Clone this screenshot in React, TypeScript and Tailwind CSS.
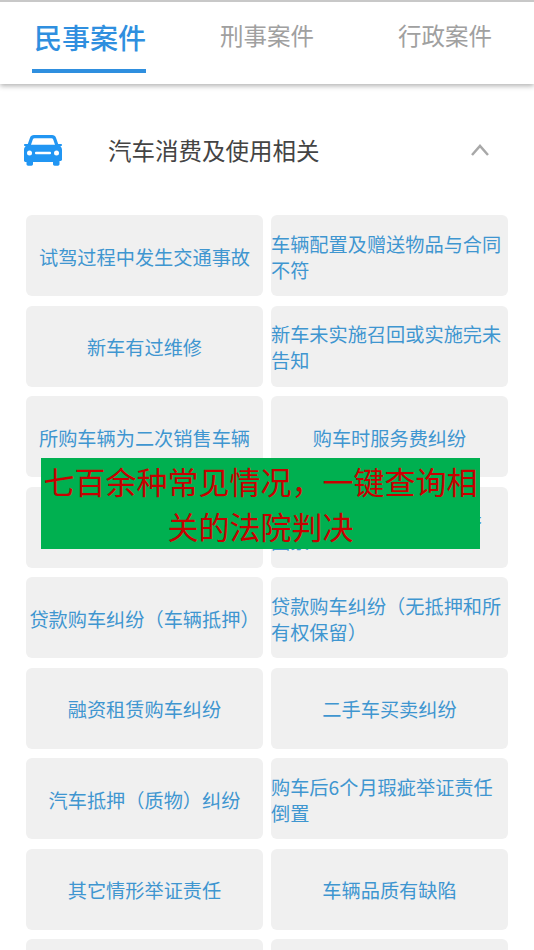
const leftCases = [
  '试驾过程中发生交通事故',
  '新车有过维修',
  '所购车辆为二次销售车辆',
  '',
  '贷款购车纠纷（车辆抵押）',
  '融资租赁购车纠纷',
  '汽车抵押（质物）纠纷',
  '其它情形举证责任',
  '',
];

const rightCases = [
  '车辆配置及赠送物品与合同不符',
  '新车未实施召回或实施完未告知',
  '购车时服务费纠纷',
  '车辆交付不符的处理结果\n因素',
  '贷款购车纠纷（无抵押和所有权保留）',
  '二手车买卖纠纷',
  '购车后6个月瑕疵举证责任倒置',
  '车辆品质有缺陷',
  '',
];

function CaseCard({ title }: { title: string }) {
  const isLong = title.length > 12;

  return (
    <div
      className={`flex h-[81px] items-center rounded-md bg-[#f0f0f0] pt-[2px] text-[19.2px] leading-[26px] whitespace-pre-line text-[#3f96d0] ${
        isLong ? 'justify-start' : 'justify-center text-center'
      }`}
    >
      <span className="block w-full">{title}</span>
    </div>
  );
}

function CarIcon() {
  return (
    <svg viewBox="0 0 38 32" className="h-[32px] w-[38px]" fill="#2196f3">
      <path d="M10 1h18c2 0 3.400 1 4 2.800L34.200 10H37c.6 0 1 .5 1 1s-.4 1-1 1h-.8c1.100 1 1.800 2.400 1.800 4v9.500c0 .8-.6 1.400-1.400 1.400H35.500V30c0 1-.7 1.700-1.600 1.700h-3.300c-.9 0-1.600-.7-1.600-1.700v-2.100H9V30c0 1-.7 1.700-1.600 1.700H4.100c-.9 0-1.600-.7-1.600-1.700v-2.100H1.400C.6 27.900 0 27.300 0 26.500V16c0-1.600.7-3 1.800-4H1c-.6 0-1-.5-1-1s.4-1 1-1h2.800L6 3.800C6.600 2 8 1 10 1zm.6 3.200c-.9 0-1.500.4-1.800 1.200L7 10.700h24l-1.800-5.300c-.3-.8-.9-1.200-1.800-1.200z" />
      <circle cx="5.500" cy="19" r="2.500" fill="#fff" />
      <circle cx="32.500" cy="19" r="2.500" fill="#fff" />
      <rect x="11" y="17.800" width="16" height="2.500" rx="1" fill="#fff" />
    </svg>
  );
}

export default function App() {
  return (
    <div className="relative h-[950px] w-[534px] overflow-hidden bg-white font-['Noto_Sans_CJK_SC',sans-serif]">
      <header className="flex h-[84px] border-t-2 border-[#c8c8c8] bg-white shadow-[0_2px_5px_rgba(0,0,0,0.3)]">
        <div className="ml-[32px] flex h-full w-[114px] flex-col items-center">
          <span className="mt-[16px] ml-[2px] text-[28px] leading-[38px] font-medium text-[#2f8fdf]">民事案件</span>
          <span className="mt-[13px] h-[4px] w-full bg-[#2f8fdf]" />
        </div>
        <span className="mt-[16px] ml-[74px] text-[23.500px] leading-[34px] text-[#a0a0a0]">刑事案件</span>
        <span className="mt-[16px] ml-[84px] text-[23.500px] leading-[34px] text-[#a0a0a0]">行政案件</span>
      </header>

      <section className="mt-[48px] flex h-[36px] items-center pr-[44px] pl-[24px]">
        <CarIcon />
        <span className="ml-[46px] text-[23.500px] leading-[34px] text-[#444444]">汽车消费及使用相关</span>
        <svg viewBox="0 0 20 14" className="ml-auto h-[14px] w-[20px]" fill="none" stroke="#a8a8a8" strokeWidth="2.500">
          <path d="M2 12l8-9 8 9" />
        </svg>
      </section>

      <div className="mt-[47px] ml-[26px] grid w-[482px] grid-cols-2 gap-x-[8px] gap-y-[9.500px]">
        {leftCases.map((title, i) => (
          <div key={i} className="contents">
            <CaseCard title={title} />
            <CaseCard title={rightCases[i]} />
          </div>
        ))}
      </div>

      <div className="absolute top-[458px] left-[41px] flex h-[91px] w-[439px] items-center bg-[#00b050] pb-[2px] text-center text-[31px] leading-[45px] text-[#c80000]">
        七百余种常见情况，一键查询相关的法院判决
      </div>
    </div>
  );
}
